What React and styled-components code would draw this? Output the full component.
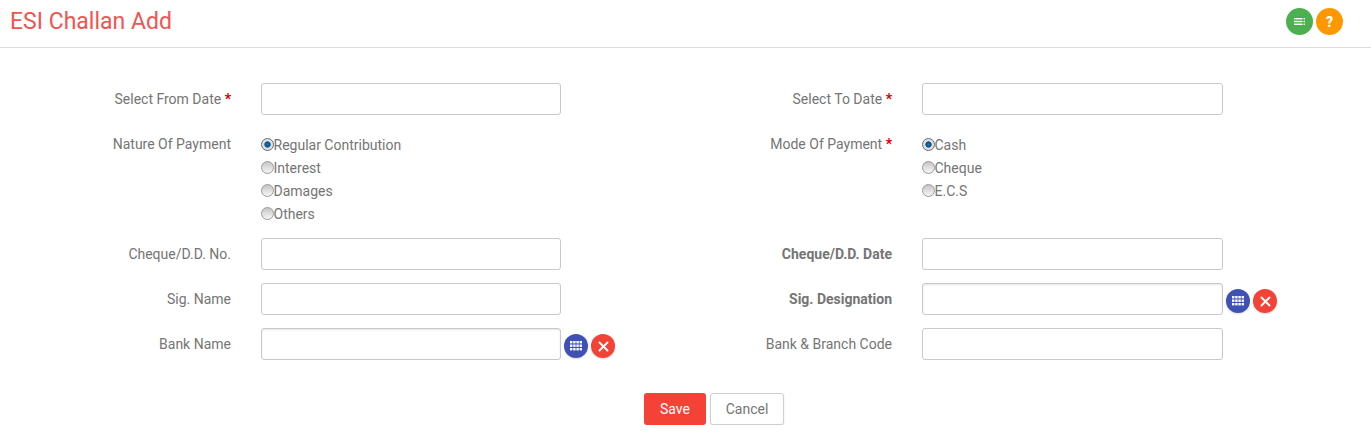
import React from "react";
import styled, { createGlobalStyle } from "styled-components";

const GlobalStyle = createGlobalStyle`
  html, body {
    margin: 0;
    padding: 0;
    background: #fff;
    font-family: Roboto, "Liberation Sans", sans-serif;
    font-size: 14px;
    color: #757575;
  }
`;

function ListIcon() {
  return (
    <svg width="11" height="7" viewBox="0 0 11 7" fill="#fff">
      <rect x="0" y="0" width="8.5" height="1.4" />
      <rect x="9.5" y="0" width="1.5" height="1.4" />
      <rect x="0" y="2.8" width="8.5" height="1.4" />
      <rect x="9.5" y="2.8" width="1.5" height="1.4" />
      <rect x="0" y="5.6" width="8.5" height="1.4" />
      <rect x="9.5" y="5.6" width="1.5" height="1.4" />
    </svg>
  );
}

function GridIcon() {
  return (
    <svg width="12" height="10" viewBox="0 0 12 10" fill="#fff">
      {[0, 3.5, 7].map((y) =>
        [0, 3.2, 6.4, 9.6].map((x) => (
          <rect key={`${x}-${y}`} x={x} y={y} width="2.4" height="2.4" />
        ))
      )}
    </svg>
  );
}

function CloseIcon() {
  return (
    <svg width="11" height="11" viewBox="0 0 11 11" stroke="#fff" strokeWidth="1.9" strokeLinecap="round">
      <path d="M1.5 1.5 L9.5 9.5 M9.5 1.5 L1.5 9.5" />
    </svg>
  );
}

function Field({ label, required, bold, wide, lookup, children }) {
  return (
    <FieldWrap>
      <Label $bold={bold}>
        {label}
        {required && <Star> *</Star>}
      </Label>
      {children || <TextInput $wide={wide} $raised={lookup} />}
      {lookup && (
        <>
          <RoundButton $color="#3f51b5">
            <GridIcon />
          </RoundButton>
          <RoundButton $color="#f44336">
            <CloseIcon />
          </RoundButton>
        </>
      )}
    </FieldWrap>
  );
}

function RadioGroup({ options }) {
  return (
    <Radios>
      {options.map((option, i) => (
        <RadioLine key={option}>
          <RadioDot $checked={i === 0} />
          {option}
        </RadioLine>
      ))}
    </Radios>
  );
}

export default function App() {
  return (
    <>
      <GlobalStyle />
      <Header>
        <Title>ESI Challan Add</Title>
        <HeaderActions>
          <CircleAction $color="#4caf50">
            <ListIcon />
          </CircleAction>
          <CircleAction $color="#ff9800">?</CircleAction>
        </HeaderActions>
      </Header>

      <Form>
        <Row>
          <Field label="Select From Date" required />
          <Field label="Select To Date" required wide />
        </Row>
        <RadioRow>
          <Field label="Nature Of Payment">
            <RadioGroup options={["Regular Contribution", "Interest", "Damages", "Others"]} />
          </Field>
          <Field label="Mode Of Payment" required>
            <RadioGroup options={["Cash", "Cheque", "E.C.S"]} />
          </Field>
        </RadioRow>
        <Row>
          <Field label="Cheque/D.D. No." />
          <Field label="Cheque/D.D. Date" bold wide />
        </Row>
        <Row>
          <Field label="Sig. Name" />
          <Field label="Sig. Designation" bold wide lookup />
        </Row>
        <Row>
          <Field label="Bank Name" lookup />
          <Field label="Bank & Branch Code" wide />
        </Row>
        <Actions>
          <SaveButton>Save</SaveButton>
          <CancelButton>Cancel</CancelButton>
        </Actions>
      </Form>
    </>
  );
}

//styles
// ================================================================

const Header = styled.header`
  height: 47px;
  border-bottom: 1px solid #dcdcdc;
  display: flex;
  align-items: flex-start;
  justify-content: space-between;
  padding: 0 28px 0 10px;
`;

const Title = styled.h1`
  margin: 7px 0 0;
  font-size: 23px;
  line-height: 29px;
  font-weight: 400;
  color: #f55252;
`;

const HeaderActions = styled.div`
  display: flex;
  gap: 3px;
  margin-top: 8px;
`;

const CircleAction = styled.div`
  width: 27px;
  height: 27px;
  border-radius: 50%;
  background: ${(p) => p.$color};
  display: flex;
  align-items: center;
  justify-content: center;
  color: #fff;
  font-weight: 900;
  font-size: 14px;
`;

const Form = styled.form`
  padding-top: 35px;
  display: flex;
  flex-direction: column;
`;

const Row = styled.div`
  display: grid;
  grid-template-columns: 661px 1fr;
  height: 32px;
  margin-bottom: 13px;
`;

const RadioRow = styled(Row)`
  height: auto;
  margin-bottom: 12px;
`;

const FieldWrap = styled.div`
  display: flex;
  align-items: flex-start;
`;

const Label = styled.label`
  width: 231px;
  margin-right: 30px;
  flex-shrink: 0;
  text-align: right;
  line-height: 32px;
  font-weight: ${(p) => (p.$bold ? 700 : 400)};
  white-space: pre;
`;

const Star = styled.span`
  color: #c00;
  font-weight: 700;
`;

const TextInput = styled.input`
  box-sizing: border-box;
  width: ${(p) => (p.$wide ? 301 : 300)}px;
  height: 32px;
  border: 1px solid #c9c9c9;
  border-radius: 3px;
  background: #fff;
  padding: 0 8px;
  outline: none;
  box-shadow: ${(p) => (p.$raised ? "inset 0 1px 2px rgba(0,0,0,0.1)" : "none")};
`;

const RoundButton = styled.button`
  width: 24px;
  height: 24px;
  margin: 6px 0 0 3px;
  padding: 0;
  border: 0;
  border-radius: 50%;
  background: ${(p) => p.$color};
  display: flex;
  align-items: center;
  justify-content: center;
  box-shadow: 0 1px 2px rgba(0, 0, 0, 0.15);
`;

const Radios = styled.div`
  display: flex;
  flex-direction: column;
  padding-top: 6px;
`;

const RadioLine = styled.div`
  height: 23px;
  display: flex;
  align-items: center;
  line-height: 23px;
`;

const RadioDot = styled.span`
  box-sizing: border-box;
  width: 13px;
  height: 13px;
  margin: -3px -0.5px 0 0;
  border-radius: 50%;
  border: 1px solid ${(p) => (p.$checked ? "#5f6b73" : "#9b9b9b")};
  background: ${(p) =>
    p.$checked
      ? "radial-gradient(circle at 50% 50%, #1a78b4 0, #0c4a78 2.6px, #d5dde2 3.6px, #eef1f3 100%)"
      : "linear-gradient(#c4c4c4, #e4e4e4 60%, #f4f4f4)"};
`;

const Actions = styled.div`
  display: flex;
  justify-content: flex-start;
  padding-left: 644px;
  gap: 4px;
  margin-top: 20px;
`;

const SaveButton = styled.button`
  width: 62px;
  height: 32px;
  padding: 0;
  border: 0;
  border-radius: 3px;
  background: #f44336;
  color: #fff;
  font: 400 14px Roboto, sans-serif;
`;

const CancelButton = styled.button`
  width: 74px;
  height: 32px;
  padding: 0;
  border: 1px solid #cfcfcf;
  border-radius: 3px;
  background: #fff;
  color: #757575;
  font: 400 14px Roboto, sans-serif;
  box-shadow: 0 1px 2px rgba(0, 0, 0, 0.1);
`;
